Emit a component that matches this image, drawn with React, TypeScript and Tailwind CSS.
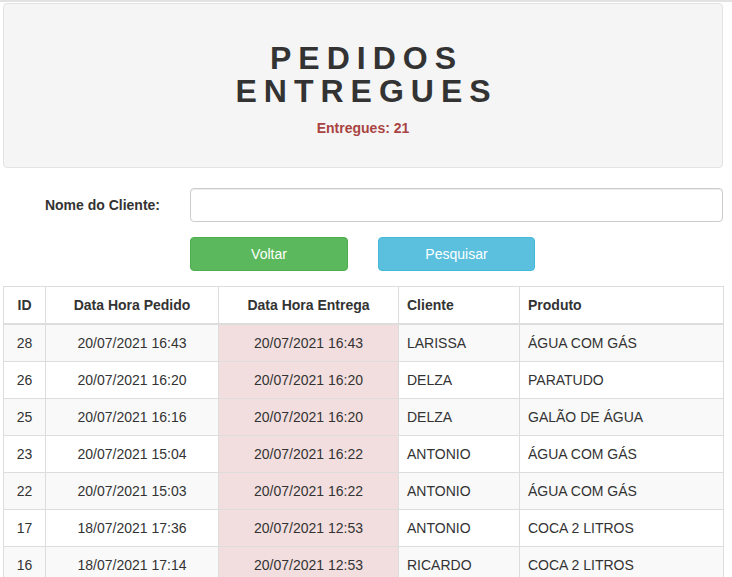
const rows = [
  { id: 28, pedido: '20/07/2021 16:43', entrega: '20/07/2021 16:43', cliente: 'LARISSA', produto: 'ÁGUA COM GÁS' },
  { id: 26, pedido: '20/07/2021 16:20', entrega: '20/07/2021 16:20', cliente: 'DELZA', produto: 'PARATUDO' },
  { id: 25, pedido: '20/07/2021 16:16', entrega: '20/07/2021 16:20', cliente: 'DELZA', produto: 'GALÃO DE ÁGUA' },
  { id: 23, pedido: '20/07/2021 15:04', entrega: '20/07/2021 16:22', cliente: 'ANTONIO', produto: 'ÁGUA COM GÁS' },
  { id: 22, pedido: '20/07/2021 15:03', entrega: '20/07/2021 16:22', cliente: 'ANTONIO', produto: 'ÁGUA COM GÁS' },
  { id: 17, pedido: '18/07/2021 17:36', entrega: '20/07/2021 12:53', cliente: 'ANTONIO', produto: 'COCA 2 LITROS' },
  { id: 16, pedido: '18/07/2021 17:14', entrega: '20/07/2021 12:53', cliente: 'RICARDO', produto: 'COCA 2 LITROS' },
]

export default function App() {
  return (
    <div className="min-h-[577px] border-t-2 border-[#e2e2e2] bg-white font-['Liberation_Sans',Arial,sans-serif] text-[14px] leading-[20px] text-[#333]">
      <div className="ml-[3px] w-[720px]">
        <div className="mt-[1px] flex h-[165px] flex-col items-center rounded-[4px] border border-[#e3e3e3] bg-[#f5f5f5] pt-[38px]">
          <h1 className="pl-[7px] text-center text-[32px] font-bold leading-[33px] tracking-[7px] text-[#333]">
            PEDIDOS
            <br />
            ENTREGUES
          </h1>
          <p className="mt-[10px] font-bold text-[#a94442]">Entregues: 21</p>
        </div>

        <div className="mt-[20px] flex items-center">
          <label className="w-[157px] text-right font-bold">Nome do Cliente:</label>
          <input
            type="text"
            className="ml-[30px] h-[34px] w-[533px] rounded-[4px] border border-[#ccc] px-3 shadow-[inset_0_1px_1px_rgba(0,0,0,0.075)] outline-none"
          />
        </div>

        <div className="mt-[15px] flex pl-[187px]">
          <button className="h-[34px] w-[158px] rounded-[4px] border border-[#4cae4c] bg-[#5cb85c] text-white">
            Voltar
          </button>
          <button className="ml-[30px] h-[34px] w-[157px] rounded-[4px] border border-[#46b8da] bg-[#5bc0de] text-white">
            Pesquisar
          </button>
        </div>

        <table className="mt-[15px] w-[720px] table-fixed border-collapse border border-[#ddd]">
          <colgroup>
            <col className="w-[42px]" />
            <col className="w-[173px]" />
            <col className="w-[180px]" />
            <col className="w-[121px]" />
            <col className="w-[204px]" />
          </colgroup>
          <thead>
            <tr>
              <th className="border border-b-2 border-[#ddd] p-2 text-center font-bold">ID</th>
              <th className="border border-b-2 border-[#ddd] p-2 text-center font-bold">Data Hora Pedido</th>
              <th className="border border-b-2 border-[#ddd] p-2 text-center font-bold">Data Hora Entrega</th>
              <th className="border border-b-2 border-[#ddd] p-2 text-left font-bold">Cliente</th>
              <th className="border border-b-2 border-[#ddd] p-2 text-left font-bold">Produto</th>
            </tr>
          </thead>
          <tbody>
            {rows.map((row, index) => (
              <tr key={row.id} className={index % 2 === 0 ? 'bg-[#f9f9f9]' : 'bg-white'}>
                <td className="border border-[#ddd] p-2 text-center">{row.id}</td>
                <td className="border border-[#ddd] p-2 text-center">{row.pedido}</td>
                <td className="border border-[#ddd] bg-[#f2dede] p-2 text-center">{row.entrega}</td>
                <td className="border border-[#ddd] p-2">{row.cliente}</td>
                <td className="border border-[#ddd] p-2">{row.produto}</td>
              </tr>
            ))}
          </tbody>
        </table>
      </div>
    </div>
  )
}
